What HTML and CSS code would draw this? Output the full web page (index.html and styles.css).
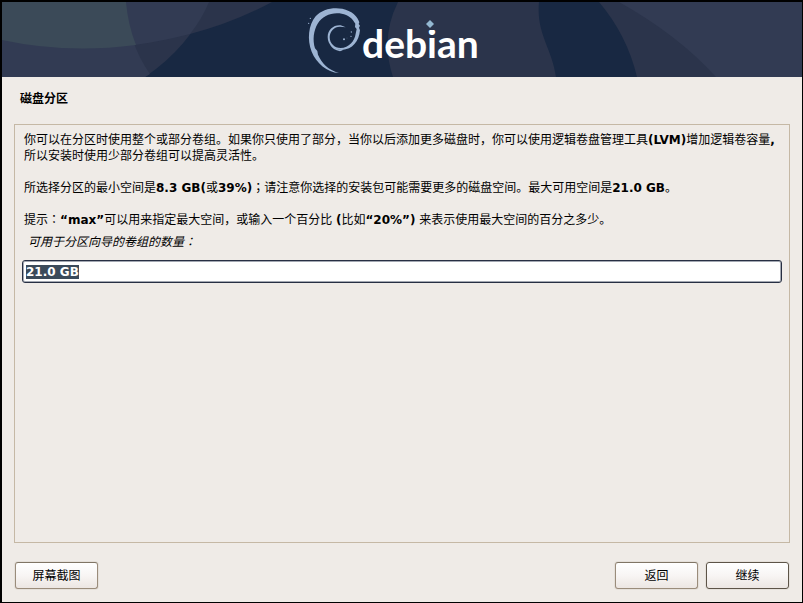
FILE: index.html
```html
<!DOCTYPE html>
<html lang="zh-CN">
<head>
  <meta charset="UTF-8">
  <meta name="viewport" content="width=device-width, initial-scale=1.0">
  <title>磁盘分区</title>
  <link rel="stylesheet" href="styles.css">
</head>
<body>
  <!-- Banner -->
  <header class="banner">
    <svg class="banner-art" viewBox="2 2 800 75" preserveAspectRatio="xMidYMid slice" role="img" aria-label="debian">
      <rect class="navy" x="2" y="2" width="800" height="75"/>
      <path class="slate" d="M2 2H209Q189 47 145 77H2Z"/>
      <path class="slate" d="M2 2H272Q233 23 190 34Q90 60 2 40Z"/>
      <path class="steel" d="M2 2H209Q202 19 190 34Q90 60 2 40Z"/>
      <path class="steel" d="M2 2H126Q128 43 150 74L145 77H2Z"/>
      <path class="teal" d="M2 2H126Q128 25 136 45Q66 54 2 40Z"/>
      <path class="slate" d="M398 2Q380 38 393 77H556C552 48 536 34 539 2Z"/>
      <path class="slate" d="M599 2Q627 35 637 77H802V2Z"/>
      <path class="steel" d="M619 2Q678 35 716 77H802V2Z"/>

      <!-- Swirl -->
      <g class="swirl" transform="translate(305 5) scale(.3333)">
        <path d="M102 204C66 202 34 174 20 140C6 104 10 60 32 34C50 13 82 6 112 11C140 17 158 34 163 52L161 57L165 62L162 68L165 76C162 110 142 133 111 135C86 135 68 119 68 96C68 74 86 59 107 61L122 67L106 65C89 64 75 77 74 96C74 115 88 129 107 129C132 128 149 108 152 86L155 72L150 66L151 56L144 46C133 32 116 25 96 25C72 25 50 37 38 56C26 76 22 104 30 130L37 138L39 149C50 174 70 195 102 204Z"/>
        <path d="M78 117Q91 135 114 136L105 139Q83 134 76 120Z"/>
        <circle cx="117" cy="103" r="3"/>
        <circle cx="126" cy="99" r="1"/>
        <circle cx="139" cy="81" r="2"/>
        <circle cx="138" cy="94" r="2"/>
        <circle cx="16" cy="40" r="2"/>
        <circle cx="11" cy="55" r="2"/>
      </g>

      <text class="wordmark" x="362" y="58">debian</text>
      <rect class="slate" x="425" y="18" width="10" height="12"/>
      <path class="diamond" d="M430 20L434 24L430 28L426 24Z"/>
    </svg>
  </header>

  <h1 class="title">磁盘分区</h1>

  <!-- Question -->
  <main class="panel">
    <div class="description">
      <p>你可以在分区时使用整个或部分卷组。如果你只使用了部分，当你以后添加更多磁盘时，你可以使用逻辑卷盘管理工具<b>(LVM)</b>增加逻辑卷容量<b>,</b> 所以安装时使用少部分卷组可以提高灵活性。</p>
      <p>所选择分区的最小空间是<b>8.3 GB(</b>或<b>39%)</b><span class="mark" lang="ja">；</span>请注意你选择的安装包可能需要更多的磁盘空间。最大可用空间是<b>21.0 GB</b>。</p>
      <p>提示<span class="mark" lang="ja">：</span><b>“max”</b>可以用来指定最大空间，或输入一个百分比 <b>(</b>比如<b>“20%”)</b> 来表示使用最大空间的百分之多少。</p>
    </div>
    <label class="prompt" for="size">可用于分区向导的卷组的数量<span class="mark" lang="ja">：</span></label>
    <input class="size-input" id="size" type="text" value="21.0 GB" autocomplete="off" spellcheck="false">
  </main>

  <!-- Buttons -->
  <footer class="actions">
    <button class="btn screenshot" type="button">屏幕截图</button>
    <button class="btn" type="button">返回</button>
    <button class="btn default" type="button">继续</button>
  </footer>

  <script>
    const sizeInput = document.getElementById('size');
    sizeInput.focus();
    sizeInput.select();
  </script>
</body>
</html>
```
FILE: styles.css
```css
* {
  box-sizing: border-box;
  margin: 0;
  padding: 0;
}

body {
  display: flex;
  flex-direction: column;
  min-height: 100vh;
  border: solid #000;
  border-width: 2px 1px 1px 2px;
  background: #efebe7;
  color: #000;
  font-family: "DejaVu Sans", "Noto Sans CJK SC", sans-serif;
  font-size: 12px;
  line-height: 16px;
}

/* Banner */
.banner {
  height: 75px;
  background: #182842;
}

.banner-art {
  display: block;
  width: 100%;
  height: 100%;
}

.navy { fill: #182842; }
.slate { fill: #2b344b; }
.steel { fill: #323b53; }
.teal { fill: #3b4a58; }
.swirl { fill: #9db4d3; }
.diamond { fill: #94b8d1; }

.wordmark {
  fill: #fff;
  font-family: Lato, "Open Sans", sans-serif;
  font-size: 39px;
  font-weight: bold;
}

.title {
  padding: 14px 18px 17px;
  font-size: 12px;
  line-height: 16px;
}

/* Question */
.panel {
  display: flex;
  flex: 1;
  flex-direction: column;
  margin: 0 12px;
  padding: 7px;
  border: 1px solid #c5b8a5;
}

.description {
  display: flex;
  flex-direction: column;
  gap: 16px;
  padding: 0 2px;
}

/* Centred full-width colon and semicolon */
.mark {
  font-family: "DejaVu Sans", "Noto Sans CJK JP", sans-serif;
}

.prompt {
  padding: 6px;
  font-style: italic;
}

.size-input {
  width: 100%;
  height: 23px;
  margin-top: 4px;
  padding: 0 3px;
  border: 1px solid #272f43;
  border-radius: 3px;
  outline: none;
  background: #fff;
  box-shadow: inset 0 0 0 1px #a3a8b2;
  font: bold 12px "DejaVu Sans", sans-serif;
}

.size-input::selection {
  background: #3b4a5a;
  color: #fff;
}

/* Buttons */
.actions {
  display: flex;
  gap: 8px;
  padding: 19px 13px 13px;
}

.btn {
  width: 83px;
  height: 27px;
  border: 1px solid #9a8c7b;
  border-top-color: #807565;
  border-radius: 3px;
  background: linear-gradient(#fff, #f8f5f4 50%, #ece6e2);
  box-shadow: 0 0 0 1px #e5e0da;
  color: #000;
  font: inherit;
}

.screenshot {
  margin-right: auto;
}

.default {
  border-color: #5d5448;
}
```
